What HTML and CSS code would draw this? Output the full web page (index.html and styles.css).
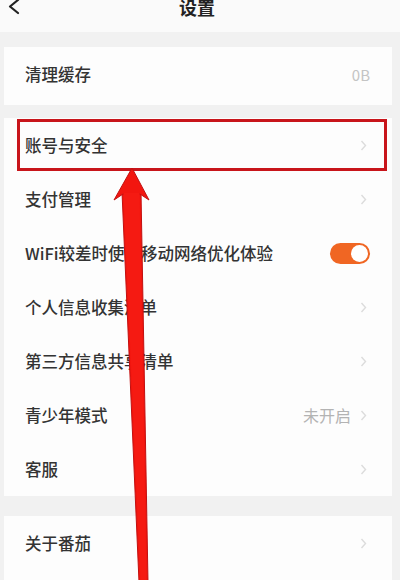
FILE: index.html
```html
<!DOCTYPE html>
<html lang="zh">
<head>
<meta charset="utf-8">
<title>设置</title>
<link rel="stylesheet" href="styles.css">
</head>
<body>
<div class="page">
  <header class="nav">
    <svg class="back" width="14" height="16" viewBox="0 0 14 16"><polyline points="11,1 3,7.5 11,14" fill="none" stroke="#222" stroke-width="2.2" stroke-linecap="round" stroke-linejoin="round"/></svg>
    <h1 class="title">设置</h1>
    <span></span>
  </header>

  <section class="card card-cache">
    <div class="row">
      <span class="label">清理缓存</span>
      <span class="value">0B</span>
    </div>
  </section>

  <section class="card">
    <div class="row highlighted">
      <span class="label">账号与安全</span>
      <svg class="chev" width="7" height="11" viewBox="0 0 7 11"><polyline points="1.5,1 5.5,5.5 1.5,10" fill="none" stroke="#dcdcdc" stroke-width="1.4"/></svg>
      <div class="mark"></div>
    </div>
    <div class="row">
      <span class="label">支付管理</span>
      <svg class="chev" width="7" height="11" viewBox="0 0 7 11"><polyline points="1.5,1 5.5,5.5 1.5,10" fill="none" stroke="#dcdcdc" stroke-width="1.4"/></svg>
    </div>
    <div class="row">
      <span class="label">WiFi较差时使用移动网络优化体验</span>
      <span class="toggle"><span class="knob"></span></span>
    </div>
    <div class="row">
      <span class="label">个人信息收集清单</span>
      <svg class="chev" width="7" height="11" viewBox="0 0 7 11"><polyline points="1.5,1 5.5,5.5 1.5,10" fill="none" stroke="#dcdcdc" stroke-width="1.4"/></svg>
    </div>
    <div class="row">
      <span class="label">第三方信息共享清单</span>
      <svg class="chev" width="7" height="11" viewBox="0 0 7 11"><polyline points="1.5,1 5.5,5.5 1.5,10" fill="none" stroke="#dcdcdc" stroke-width="1.4"/></svg>
    </div>
    <div class="row">
      <span class="label">青少年模式</span>
      <span class="value value-muted">未开启</span>
      <svg class="chev" width="7" height="11" viewBox="0 0 7 11"><polyline points="1.5,1 5.5,5.5 1.5,10" fill="none" stroke="#dcdcdc" stroke-width="1.4"/></svg>
    </div>
    <div class="row">
      <span class="label">客服</span>
      <svg class="chev" width="7" height="11" viewBox="0 0 7 11"><polyline points="1.5,1 5.5,5.5 1.5,10" fill="none" stroke="#dcdcdc" stroke-width="1.4"/></svg>
    </div>
  </section>

  <section class="card card-last">
    <div class="row">
      <span class="label">关于番茄</span>
      <svg class="chev" width="7" height="11" viewBox="0 0 7 11"><polyline points="1.5,1 5.5,5.5 1.5,10" fill="none" stroke="#dcdcdc" stroke-width="1.4"/></svg>
    </div>
  </section>

  <svg class="arrow" width="400" height="580" viewBox="0 0 400 580">
    <polygon points="122,192 141,192 148,582 139,582" fill="#f2160f" stroke="#c21010" stroke-width="1"/>
    <polygon points="132,168 149,200 140,194 123,194 114,200" fill="#f2160f" stroke="#c21010" stroke-width="1" stroke-linejoin="round"/>
    <polygon points="123.5,193 139.5,193 146.5,582 140.5,582" fill="#f51a12"/>
  </svg>
</div>
</body>
</html>
```

FILE: styles.css
```css
* { box-sizing: border-box; }

html, body {
  margin: 0;
  padding: 0;
}

body {
  width: 400px;
  height: 580px;
  overflow: hidden;
  background: #f1f1f1;
  font-family: "Noto Sans CJK SC", "Noto Sans", sans-serif;
  color: #333;
}

.page {
  position: relative;
  width: 400px;
  height: 580px;
  overflow: hidden;
}

.nav {
  height: 32px;
  background: #fafafa;
  display: grid;
  grid-template-columns: 34px 1fr 40px;
  align-items: start;
}

.back {
  display: block;
  margin: -1px 0 0 7px;
}

.title {
  margin: 0;
  font-size: 18px;
  line-height: 14px;
  font-weight: 700;
  text-align: center;
  color: #222;
}

.card {
  background: #fdfdfd;
  margin: 13px 8px 0 4px;
}

.card-cache {
  margin-top: 15px;
}

.card-cache .row {
  height: 58px;
  padding-bottom: 4px;
}

.card-last {
  margin-top: 20px;
  padding-bottom: 20px;
}

.row {
  position: relative;
  height: 54px;
  display: flex;
  align-items: center;
  padding: 0 22px 0 21px;
}

.label {
  flex: 1;
  font-size: 16.5px;
  font-weight: 500;
  color: #333;
  white-space: nowrap;
}

.value {
  font-size: 15px;
  color: #c4c4c4;
}

.value-muted {
  font-size: 16px;
  color: #b3b3b3;
  margin-right: 9px;
}

.chev {
  display: block;
  margin-right: 3px;
}

.toggle {
  width: 40px;
  height: 21px;
  border-radius: 11px;
  background: #f06623;
  display: flex;
  align-items: center;
  justify-content: flex-end;
  padding-right: 2px;
}

.knob {
  width: 17px;
  height: 17px;
  border-radius: 50%;
  background: #fff;
}

.mark {
  position: absolute;
  left: 13px;
  right: 5px;
  top: 1px;
  bottom: 1px;
  border: 3px solid #c8151b;
}

.arrow {
  position: absolute;
  left: 0;
  top: 0;
  pointer-events: none;
}
```
